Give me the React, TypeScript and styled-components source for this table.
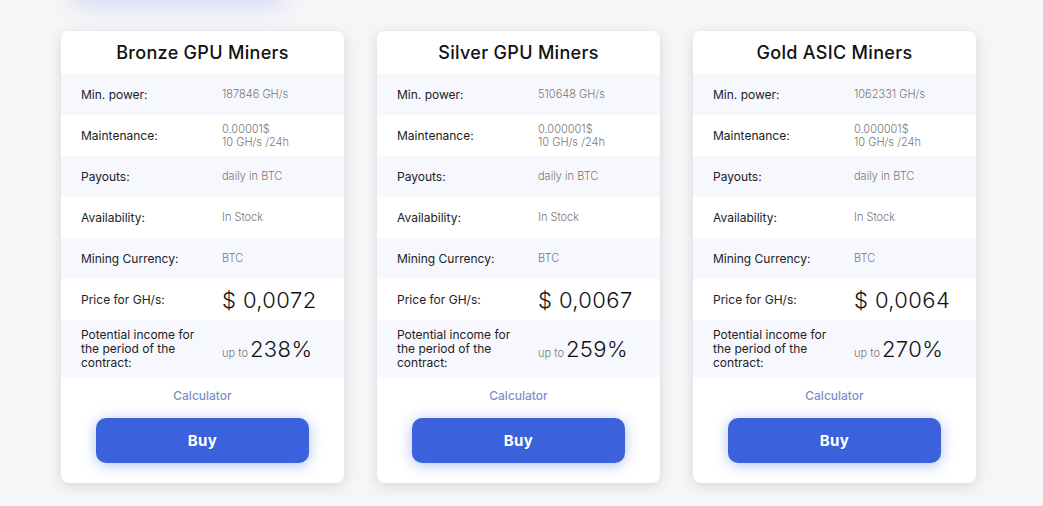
import styled, { createGlobalStyle } from 'styled-components';

const GlobalStyle = createGlobalStyle`
  body {
    margin: 0;
    background: #f6f6f8;
    font-family: Inter, "Noto Sans", sans-serif;
  }
`;

const Page = styled.div`
  width: 1043px;
  height: 506px;
  overflow: hidden;
`;

const TopGlow = styled.div`
  width: 215px;
  height: 24px;
  margin: -24px 0 0 70px;
  border-radius: 12px;
  background: #eef0fb;
  box-shadow: 0 6px 22px rgba(90, 115, 230, 0.22);
`;

const CardList = styled.div`
  display: flex;
  gap: 33px;
  padding: 31px 0 0 61px;
`;

const Card = styled.div`
  width: 283px;
  height: 452px;
  background: #fff;
  border-radius: 8px;
  box-shadow: 0 3px 14px rgba(0, 0, 0, 0.13);
  display: flex;
  flex-direction: column;
  overflow: hidden;
`;

const Title = styled.h2`
  margin: 0;
  height: 43px;
  line-height: 43px;
  text-align: center;
  font-size: 18px;
  font-weight: 500;
  color: #111;
  letter-spacing: 0.3px;
`;

const Row = styled.div<{ $tall?: boolean }>`
  display: flex;
  align-items: center;
  height: ${(p) => (p.$tall ? 57 : 41)}px;
  padding-left: 20px;
  &:nth-of-type(odd) {
    background: #f7f8fd;
  }
`;

const Label = styled.div`
  width: 141px;
  flex-shrink: 0;
  font-size: 12px;
  line-height: 14px;
  color: #222;
`;

const Value = styled.div`
  font-size: 11px;
  line-height: 13px;
  font-weight: 300;
  color: #777;
`;

const Big = styled.span`
  font-size: 22px;
  font-weight: 300;
  color: #111;
  letter-spacing: 0.4px;
`;

const UpTo = styled.span`
  font-size: 11px;
  font-weight: 300;
  color: #777;
  margin-right: 2px;
`;

const Footer = styled.div`
  display: flex;
  flex-direction: column;
  align-items: center;
  padding-top: 12px;
`;

const CalcLink = styled.a`
  font-size: 12px;
  line-height: 14px;
  font-weight: 500;
  color: #7d8fc7;
  cursor: pointer;
`;

const BuyButton = styled.button`
  margin-top: 15px;
  width: 213px;
  height: 45px;
  border: none;
  border-radius: 10px;
  background: #3c61dc;
  color: #fff;
  font-family: inherit;
  font-size: 15px;
  font-weight: 700;
  letter-spacing: 0.4px;
  box-shadow: 0 2px 14px rgba(60, 97, 220, 0.4);
  cursor: pointer;
`;

type Plan = {
  title: string;
  power: string;
  maintenance: string;
  price: string;
  income: string;
};

const plans: Plan[] = [
  { title: 'Bronze GPU Miners', power: '187846 GH/s', maintenance: '0.00001$', price: '$ 0,0072', income: '238%' },
  { title: 'Silver GPU Miners', power: '510648 GH/s', maintenance: '0.000001$', price: '$ 0,0067', income: '259%' },
  { title: 'Gold ASIC Miners', power: '1062331 GH/s', maintenance: '0.000001$', price: '$ 0,0064', income: '270%' },
];

function PlanCard({ plan }: { plan: Plan }) {
  return (
    <Card>
      <Title>{plan.title}</Title>
      <Row>
        <Label>Min. power:</Label>
        <Value>{plan.power}</Value>
      </Row>
      <Row>
        <Label>Maintenance:</Label>
        <Value>
          {plan.maintenance}
          <br />
          10 GH/s /24h
        </Value>
      </Row>
      <Row>
        <Label>Payouts:</Label>
        <Value>daily in BTC</Value>
      </Row>
      <Row>
        <Label>Availability:</Label>
        <Value>In Stock</Value>
      </Row>
      <Row>
        <Label>Mining Currency:</Label>
        <Value>BTC</Value>
      </Row>
      <Row>
        <Label>Price for GH/s:</Label>
        <Big>{plan.price}</Big>
      </Row>
      <Row $tall>
        <Label>
          Potential income for
          <br />
          the period of the
          <br />
          contract:
        </Label>
        <div>
          <UpTo>up to</UpTo>
          <Big>{plan.income}</Big>
        </div>
      </Row>
      <Footer>
        <CalcLink>Calculator</CalcLink>
        <BuyButton type="button">Buy</BuyButton>
      </Footer>
    </Card>
  );
}

export default function App() {
  return (
    <Page>
      <GlobalStyle />
      <TopGlow />
      <CardList>
        {plans.map((p) => (
          <PlanCard key={p.title} plan={p} />
        ))}
      </CardList>
    </Page>
  );
}
